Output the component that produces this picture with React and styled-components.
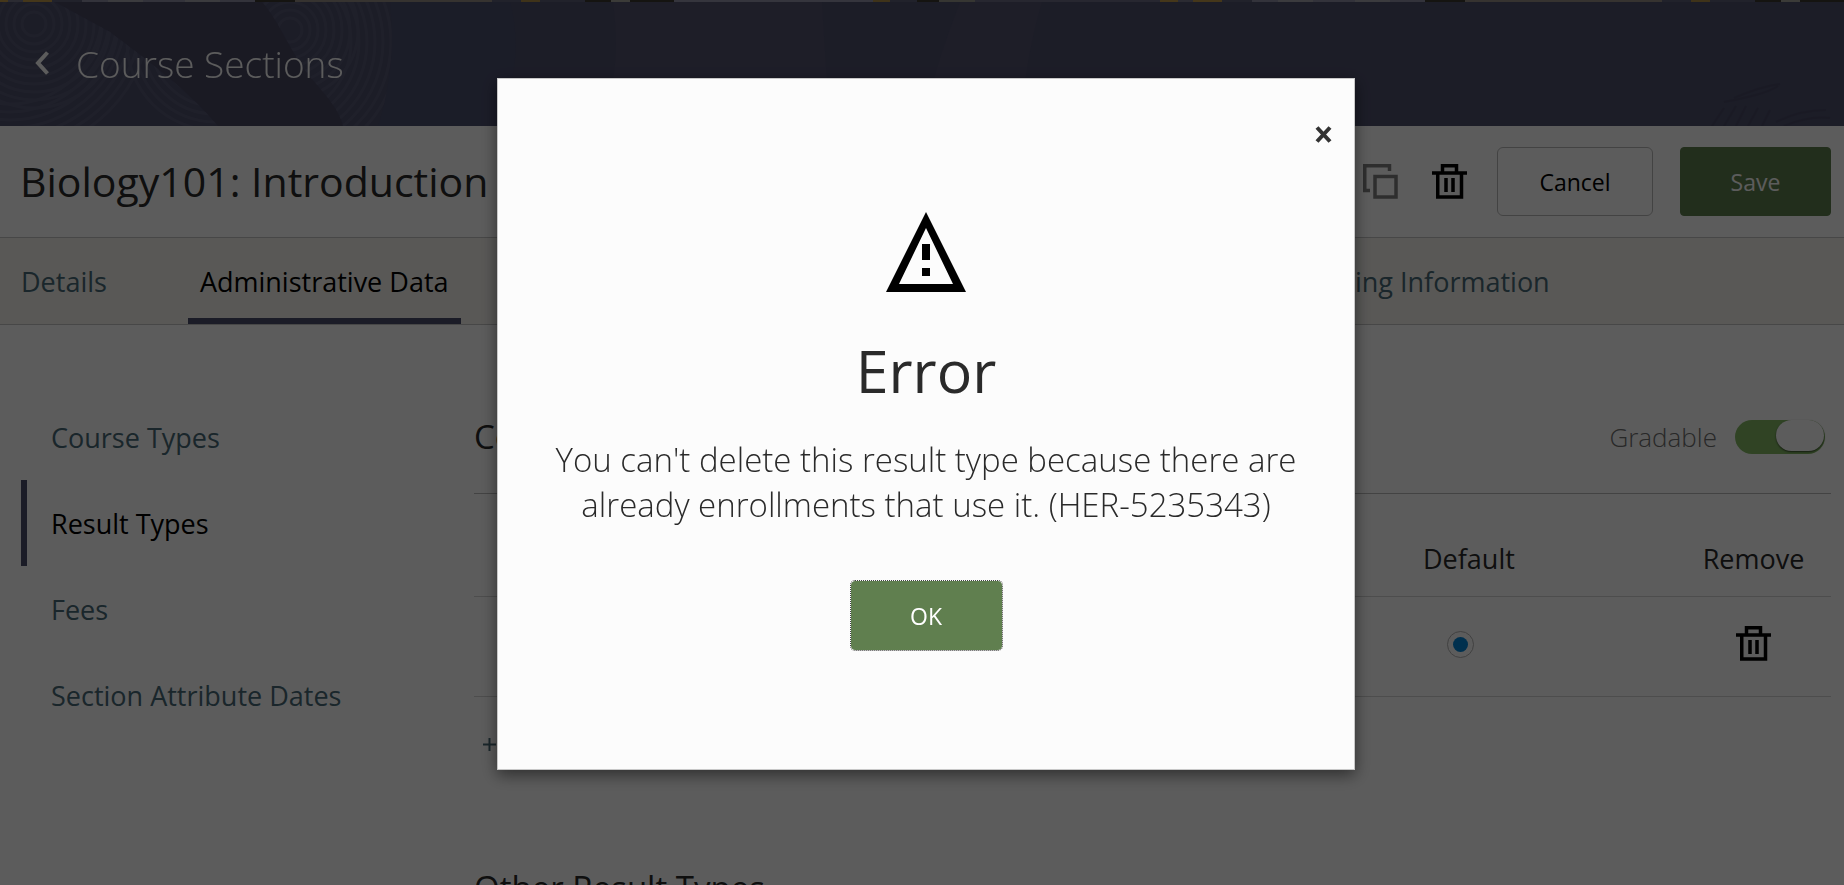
import React from "react";
import styled, { createGlobalStyle, css } from "styled-components";

const GlobalStyle = createGlobalStyle`
  * {
    box-sizing: border-box;
  }

  body {
    margin: 0;
    overflow: hidden;
    background: #fff;
    color: #2a2a2a;
    font-family: "Open Sans", "Noto Sans", sans-serif;
    font-size: 27px;
  }

  button {
    font-family: inherit;
    cursor: pointer;
  }
`;

const Stripe = styled.div`
  height: 2px;
  background: repeating-linear-gradient(
    to right,
    #c09a48 0 8px,
    #77788c 8px 23px,
    #c09a48 23px 52px,
    #5c5e78 52px 82px,
    #8d8ea5 82px 108px,
    #a3a3ac 108px 143px,
    #8d8ea5 143px 185px,
    #a3a3ac 185px 220px,
    #8d8ea5 220px 255px,
    #3c3830 255px 295px,
    #968f86 295px 492px,
    #5c5e78 492px 521px,
    #b08d45 521px 540px,
    #5c5e78 540px 585px,
    #3c3830 585px 611px,
    #a3a39c 611px 630px,
    #3c3830 630px 674px,
    #9292a8 674px 873px,
    #b08d45 873px 890px,
    #5c5e78 890px 917px,
    #3c3830 917px 939px,
    #96968c 939px 975px,
    #6c6e86 975px 1160px,
    #c09a48 1160px 1170px
  );
`;

const Header = styled.header`
  position: relative;
  display: flex;
  align-items: center;
  gap: 27px;
  height: 124px;
  padding: 0 35px 2px;
  overflow: hidden;
  background: #4e506d;
  color: #fff;
`;

const Texture = styled.svg`
  position: absolute;
  top: 0;
  left: 0;
  width: 1844px;
  height: 124px;
`;

const BackLink = styled.a`
  position: relative;
  display: flex;
  color: #fff;
`;

const HeaderTitle = styled.div`
  position: relative;
  font-size: 37px;
  font-weight: 300;
`;

const TitleBar = styled.div`
  display: flex;
  align-items: center;
  justify-content: space-between;
  height: 112px;
  padding: 0 13px 0 20px;
  border-bottom: 1px solid #c4c4c4;
`;

const PageTitle = styled.h1`
  margin: 0;
  padding-bottom: 2px;
  font-size: 41px;
  font-weight: 400;
  white-space: nowrap;
`;

const Actions = styled.div`
  display: flex;
  align-items: center;
  gap: 27px;
`;

const IconGroup = styled.div`
  display: flex;
  gap: 34px;
  padding-right: 3px;
`;

const IconButton = styled.button`
  display: inline-flex;
  padding: 0;
  border: 0;
  background: none;
  color: ${(props) => (props.$muted ? "#808080" : "#000")};
`;

const Button = styled.button`
  min-width: ${(props) => (props.$primary ? "151px" : "156px")};
  height: 69px;
  border: 1px solid #bababa;
  border-radius: 6px;
  background: none;
  color: #000;
  font-size: 23px;

  ${(props) =>
    props.$primary &&
    css`
      border-color: #607f4f;
      border-radius: 4px;
      background: #607f4f;
      color: #fff;
    `}

  ${(props) =>
    props.$focused &&
    css`
      outline: 1px dotted #444;
    `}
`;

const TabBar = styled.nav`
  display: flex;
  gap: 69px;
  height: 87px;
  padding: 0 9px;
  border-bottom: 1px solid #c4c4c4;
  background: #f5f4ef;
`;

const Tab = styled.a`
  display: flex;
  align-items: center;
  padding: 6px 12px 0;
  border-bottom: 6px solid ${(props) => (props.$active ? "#4d4e6c" : "transparent")};
  color: ${(props) => (props.$active ? "#000" : "#486a77")};
  text-decoration: none;
  white-space: nowrap;
`;

const Content = styled.div`
  display: grid;
  grid-template-columns: 453px 1fr;
  padding: 69px 13px 0 21px;
`;

const SideNav = styled.nav`
  display: flex;
  flex-direction: column;
`;

const SideLink = styled.a`
  display: flex;
  align-items: center;
  height: 86px;
  padding-left: 24px;
  border-left: 6px solid ${(props) => (props.$active ? "#4d4e6c" : "transparent")};
  color: ${(props) => (props.$active ? "#000" : "#486a77")};
  text-decoration: none;
`;

const SectionHead = styled.div`
  display: flex;
  align-items: center;
  justify-content: space-between;
  height: 100px;
  padding: 0 6px 14px 0;
  border-bottom: 1px solid ${(props) => (props.$plain ? "transparent" : "#bababa")};
`;

const SectionTitle = styled.h2`
  margin: 0;
  font-size: 33px;
  font-weight: 400;
`;

const SwitchLabel = styled.label`
  display: flex;
  align-items: center;
  gap: 18px;
  color: #707070;
  font-size: 26px;
  font-weight: 300;
`;

const Switch = styled.input`
  appearance: none;
  width: 90px;
  height: 34px;
  margin: 0;
  padding-right: 1px;
  border-radius: 17px;
  background: #85bb65;
  display: flex;
  justify-content: flex-end;

  &::before {
    content: "";
    width: 48px;
    height: 31px;
    border-radius: 16px;
    background: #fff;
    box-shadow: 0 1px 2px rgba(0, 0, 0, 0.6);
  }
`;

const Table = styled.table`
  width: 100%;
  border-collapse: collapse;
  table-layout: fixed;
`;

const HeadCell = styled.th`
  width: ${(props) => props.$width};
  height: 102px;
  padding: 28px 0 0;
  padding-right: ${(props) => (props.$last ? "26px" : 0)};
  border-bottom: 1px solid #d4d4d4;
  font-weight: 400;
  text-align: ${(props) => (props.$last ? "center" : "left")};
`;

const Cell = styled.td`
  height: 100px;
  padding: 0 0 10px;
  padding-left: ${(props) => (props.$inset ? "24px" : 0)};
  padding-right: ${(props) => (props.$last ? "26px" : 0)};
  border-bottom: 1px solid #d4d4d4;
  text-align: ${(props) => (props.$last ? "center" : "left")};
  vertical-align: middle;

  > * {
    vertical-align: middle;
  }
`;

const Radio = styled.input`
  appearance: none;
  display: inline-grid;
  place-items: center;
  width: 27px;
  height: 27px;
  margin: 0;
  border: 1px solid #b4b4b4;
  border-radius: 50%;

  &:checked::before {
    content: "";
    width: 15px;
    height: 15px;
    border-radius: 50%;
    background: #0085d8;
  }
`;

const AddLink = styled.button`
  display: flex;
  align-items: center;
  gap: 12px;
  height: 96px;
  margin-bottom: 52px;
  padding: 0 9px;
  border: 0;
  background: none;
  color: #486a77;
  font-size: 23px;
`;

const Backdrop = styled.div`
  position: fixed;
  inset: 0;
  display: flex;
  align-items: flex-start;
  justify-content: center;
  padding: 78px 0 0 8px;
  background: rgba(0, 0, 0, 0.64);
`;

const Modal = styled.div`
  display: flex;
  flex-direction: column;
  align-items: center;
  width: 858px;
  max-width: 90%;
  padding: 35px 11px 119px;
  border: 1px solid #c8c8c8;
  background: #fcfcfc;
  box-shadow: 0 5px 15px rgba(0, 0, 0, 0.5);
`;

const CloseButton = styled.button`
  display: flex;
  align-items: center;
  justify-content: center;
  align-self: flex-end;
  width: 40px;
  height: 40px;
  margin-bottom: 58px;
  padding: 0;
  border: 0;
  background: none;
`;

const ModalTitle = styled.h2`
  margin: 36px 0 25px;
  font-size: 59px;
  font-weight: 400;
  line-height: 84px;
`;

const Message = styled.p`
  max-width: 760px;
  margin: 0 0 54px;
  font-size: 33px;
  font-weight: 300;
  line-height: 45px;
  text-align: center;
`;

const rings = (from, to) => {
  const list = [];
  for (let r = from; r <= to; r += 8) list.push(r);
  return list;
};

const HeaderTexture = () => (
  <Texture viewBox="0 0 1844 124" aria-hidden="true">
    <path d="M55 0H262C280 20 290 50 310 75C328 95 340 110 343 124H218C190 90 150 60 110 30Z" fill="#494963" />
    <path d="M390 0H510C518 30 520 70 498 124H378C392 80 394 40 390 0Z" fill="#4d5070" />
    <path d="M613 0H822C824 40 828 80 828 124H600C618 80 618 40 613 0Z" fill="#535370" />
    <path d="M960 0H1042C1030 40 1024 80 1020 124H925C930 80 945 40 960 0Z" fill="#535370" />
    <g fill="none" stroke="#5e5f7a" strokeWidth="3" opacity="0.7">
      {rings(12, 68).map((r) => (
        <circle key={r} cx="290" cy="28" r={r} clipPath="url(#right)" />
      ))}
      {rings(76, 124).map((r) => (
        <circle key={r} cx="275" cy="40" r={r} clipPath="url(#right)" />
      ))}
      {rings(12, 84).map((r) => (
        <circle key={r} cx="34" cy="22" r={r} clipPath="url(#left)" />
      ))}
      {rings(92, 140).map((r) => (
        <circle key={r} cx="10" cy="10" r={r} clipPath="url(#left)" />
      ))}
      {rings(40, 88).map((r) => (
        <circle key={r} cx="215" cy="40" r={r} clipPath="url(#left)" />
      ))}
    </g>
    <g fill="none" stroke="#464660" strokeWidth="2" opacity="0.6">
      <path d="M1712 124l12-18M1724 124l12-20M1736 124l10-20M1748 124l10-18M1762 124l8-16" />
      <path d="M1724 100c20-4 42-8 54-16M1734 96c14-6 30-12 46-14M1776 120c16-8 34-12 50-12M1784 124c14-6 30-10 46-8" />
    </g>
    <defs>
      <clipPath id="left">
        <path d="M0 0H55L110 30C150 60 190 90 218 124H0Z" />
      </clipPath>
      <clipPath id="right">
        <path d="M262 0H390C394 40 392 80 378 124H343C340 110 328 95 310 75C290 50 280 20 262 0Z" />
      </clipPath>
    </defs>
  </Texture>
);

const TrashIcon = () => (
  <svg width="35" height="35" viewBox="0 0 35 35" fill="none" stroke="currentColor" strokeWidth="3.5" aria-hidden="true">
    <path d="M0 9H35M10.500 9V1.750H24.500V9M5.750 9V33H29.500V9" />
    <path d="M14 14V28M21 14V28" />
  </svg>
);

const CopyIcon = () => (
  <svg width="35" height="35" viewBox="0 0 35 35" fill="none" stroke="currentColor" strokeWidth="3.5" aria-hidden="true">
    <path d="M26.500 7V1.750H1.750V26.500H7" />
    <rect x="12" y="12.500" width="21" height="20.500" />
  </svg>
);

const WarningIcon = () => (
  <svg width="80" height="80" viewBox="0 0 80 80" aria-hidden="true">
    <path fillRule="evenodd" d="M40 0L80 80H0ZM40 16L13 72H67Z" />
    <path d="M36 32H44V48H36ZM36 56H44V64H36Z" />
  </svg>
);

const tabs = [
  "Details",
  "Administrative Data",
  "Instructional Delivery",
  "Enrollment Requests",
  "Scheduling Information",
];
const sideLinks = ["Course Types", "Result Types", "Fees", "Section Attribute Dates"];

const App = () => {
  const [gradable, setGradable] = React.useState(true);
  const [open, setOpen] = React.useState(true);

  return (
    <>
      <GlobalStyle />
      <Stripe />
      <Header>
        <HeaderTexture />
        <BackLink href="#back" aria-label="Back">
          <svg width="14" height="24" viewBox="0 0 14 24" fill="none" stroke="currentColor" strokeWidth="4">
            <path d="M12.500 1.500L3 12L12.500 22.500" />
          </svg>
        </BackLink>
        <HeaderTitle>Course Sections</HeaderTitle>
      </Header>
      <TitleBar>
        <PageTitle>Biology101: Introduction to Biology</PageTitle>
        <Actions>
          <IconGroup>
            <IconButton $muted aria-label="Copy">
              <CopyIcon />
            </IconButton>
            <IconButton aria-label="Delete">
              <TrashIcon />
            </IconButton>
          </IconGroup>
          <Button>Cancel</Button>
          <Button $primary>Save</Button>
        </Actions>
      </TitleBar>
      <TabBar>
        {tabs.map((tab) => (
          <Tab key={tab} href="#tab" $active={tab === "Administrative Data"}>
            {tab}
          </Tab>
        ))}
      </TabBar>
      <Content>
        <SideNav>
          {sideLinks.map((link) => (
            <SideLink key={link} href="#section" $active={link === "Result Types"}>
              {link}
            </SideLink>
          ))}
        </SideNav>
        <main>
          <SectionHead>
            <SectionTitle>Course Result Types</SectionTitle>
            <SwitchLabel>
              Gradable
              <Switch
                type="checkbox"
                role="switch"
                checked={gradable}
                onChange={(e) => setGradable(e.target.checked)}
              />
            </SwitchLabel>
          </SectionHead>
          <Table>
            <thead>
              <tr>
                <HeadCell $width="auto" aria-label="Result type" />
                <HeadCell $width="279px">Default</HeadCell>
                <HeadCell $width="129px" $last>
                  Remove
                </HeadCell>
              </tr>
            </thead>
            <tbody>
              <tr>
                <Cell />
                <Cell $inset>
                  <Radio type="radio" name="default" aria-label="Default" defaultChecked />
                </Cell>
                <Cell $last>
                  <IconButton aria-label="Remove">
                    <TrashIcon />
                  </IconButton>
                </Cell>
              </tr>
            </tbody>
          </Table>
          <AddLink aria-label="Add result type">
            <svg width="13" height="13" viewBox="0 0 13 13" stroke="currentColor" strokeWidth="2">
              <path d="M0 6.500H13M6.500 0V13" />
            </svg>
          </AddLink>
          <SectionHead $plain>
            <SectionTitle>Other Result Types</SectionTitle>
          </SectionHead>
        </main>
      </Content>
      {open && (
        <Backdrop>
          <Modal role="alertdialog" aria-modal="true" aria-labelledby="error-title" aria-describedby="error-text">
            <CloseButton aria-label="Close" onClick={() => setOpen(false)}>
              <svg width="17" height="17" viewBox="0 0 17 17" stroke="#333" strokeWidth="4">
                <path d="M2 1.500L15 15.500M15 1.500L2 15.500" />
              </svg>
            </CloseButton>
            <WarningIcon />
            <ModalTitle id="error-title">Error</ModalTitle>
            <Message id="error-text">
              You can't delete this result type because there are already enrollments that use it. (HER-5235343)
            </Message>
            <Button $primary $focused onClick={() => setOpen(false)}>
              OK
            </Button>
          </Modal>
        </Backdrop>
      )}
    </>
  );
};

export default App;
